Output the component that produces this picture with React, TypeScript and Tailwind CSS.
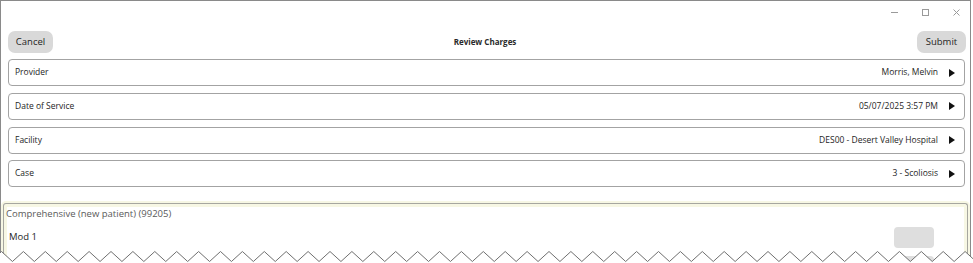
import React from "react";

const FONT = { fontFamily: '"Open Sans", "Noto Sans", sans-serif' };

type Field = { label: string; value: string };

const FIELDS: Field[] = [
  { label: "Provider", value: "Morris, Melvin" },
  { label: "Date of Service", value: "05/07/2025 3:57 PM" },
  { label: "Facility", value: "DES00 - Desert Valley Hospital" },
  { label: "Case", value: "3 - Scoliosis" },
];

function Arrow() {
  return (
    <svg width="6" height="8" viewBox="0 0 6 8" className="shrink-0">
      <path d="M0 0 L6 4 L0 8 Z" fill="#111" />
    </svg>
  );
}

function FieldRow({ field }: { field: Field }) {
  return (
    <div className="flex h-[27px] items-center justify-between rounded-[4px] border border-[#a3a3a3] bg-white pl-[6px] pr-[9px]">
      <span className="text-[8.5px] text-[#1e1e1e]">{field.label}</span>
      <div className="flex items-center gap-[11px]">
        <span className="text-[8.5px] text-[#1e1e1e]">{field.value}</span>
        <Arrow />
      </div>
    </div>
  );
}

/** Torn-paper edge across the bottom of the screenshot. */
function ZigZag() {
  const period = 21.9;
  const pts: string[] = [];
  for (let i = -2; i < 48; i++) {
    const x = 1.5 + i * period;
    pts.push(`${x.toFixed(2)},2.5`);
    pts.push(`${(x + period / 2).toFixed(2)},12.5`);
  }
  const line = pts.join(" ");
  return (
    <svg
      width="973"
      height="14"
      viewBox="0 0 973 14"
      className="pointer-events-none absolute left-0 top-[249px]"
    >
      <polygon points={`-50,14 ${line} 1100,14`} fill="#fff" />
      <polyline points={line} fill="none" stroke="#6f6f6f" strokeWidth="1" />
    </svg>
  );
}

export default function App() {
  return (
    <div className="relative h-[263px] w-[973px] overflow-hidden bg-white" style={FONT}>
      <div className="h-[263px] w-[971px] border-l border-r border-t border-[#8a8a8a]">
        {/* window chrome */}
        <div className="flex h-[23px] items-center justify-end gap-[24px] pr-[10px]">
          <svg width="7" height="7" viewBox="0 0 7 7">
            <path d="M0 3.5 H7" stroke="#9a9a9a" strokeWidth="1" />
          </svg>
          <svg width="7" height="7" viewBox="0 0 7 7">
            <rect x="0.5" y="0.5" width="6" height="6" fill="none" stroke="#9a9a9a" strokeWidth="1" />
          </svg>
          <svg width="7" height="7" viewBox="0 0 7 7">
            <path d="M0.5 0.5 L6.5 6.5 M6.5 0.5 L0.5 6.5" stroke="#9a9a9a" strokeWidth="1" />
          </svg>
        </div>

        {/* header */}
        <div className="mt-[7px] flex items-center justify-between pl-[7px] pr-[4px]">
          <button className="h-[22px] w-[45px] rounded-[7px] bg-[#d9d9d9] text-[9.5px] text-[#1e1e1e]">
            Cancel
          </button>
          <span className="text-[8px] font-bold text-[#2a2a2a]">Review Charges</span>
          <button className="h-[22px] w-[49px] rounded-[7px] bg-[#d9d9d9] text-[9.5px] text-[#1e1e1e]">
            Submit
          </button>
        </div>

        {/* fields */}
        <div className="ml-[7px] mr-[5px] mt-[6.3px] flex flex-col gap-[6.67px]">
          {FIELDS.map((f) => (
            <FieldRow key={f.label} field={f} />
          ))}
        </div>

        {/* charge panel */}
        <div className="ml-[2px] mr-[2px] mt-[16px] rounded-t-[3px] border border-b-0 border-[#a6a6a0] bg-white shadow-[0_0_0_2px_#f7f7e4,inset_0_0_0_3px_#f7f7e4]">
          <div className="pl-[2px] pt-[3px] text-[9.5px] text-[#5a5a5a]">
            Comprehensive (new patient) (99205)
          </div>
          <div className="mt-[5px] flex items-start justify-between pl-[5px] pr-[33px]">
            <span className="mt-[3px] text-[9.5px] text-[#1e1e1e]">Mod 1</span>
            <div className="flex flex-col gap-[8px]">
              <div className="h-[21px] w-[40px] rounded-[4px] bg-[#dedede]" />
              <div className="h-[21px] w-[40px] rounded-[4px] bg-[#dedede]" />
            </div>
          </div>
        </div>
      </div>
      <ZigZag />
    </div>
  );
}
